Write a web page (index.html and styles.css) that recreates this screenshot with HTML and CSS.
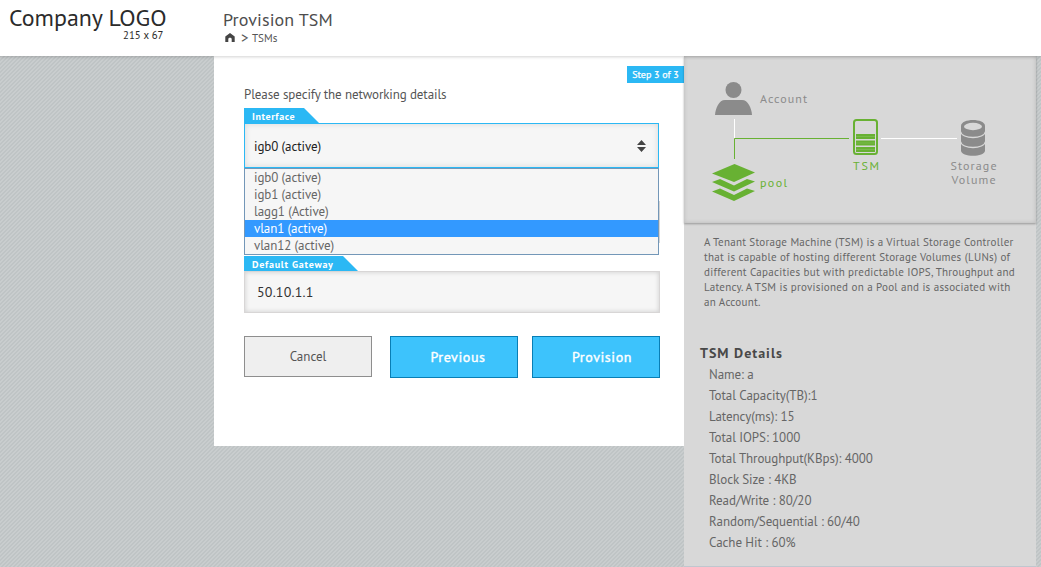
FILE: index.html
```html
<!DOCTYPE html>
<html lang="en">
<head>
<meta charset="utf-8">
<title>Provision TSM</title>
<link rel="stylesheet" href="styles.css">
</head>
<body>
<header class="header">
  <div class="logo">
    <div class="logo-name">Company LOGO</div>
    <div class="logo-size">215 x 67</div>
  </div>
  <div class="heading">
    <h1 class="title">Provision TSM</h1>
    <nav class="crumbs">
      <svg class="home" width="10" height="9" viewBox="0 0 10 9"><path fill="#444" d="M5 0 .3 3.500V9h3V6.200c0-1.800 3.400-1.800 3.400 0V9h3V3.500z"/></svg>
      <span class="sep">&gt;</span><span class="crumb">TSMs</span>
    </nav>
  </div>
</header>
<div class="page">
  <main class="panel">
    <div class="step">Step 3 of 3</div>
    <p class="intro">Please specify the networking details</p>
    <div class="tab tab-interface"><span>Interface</span></div>
    <div class="select">
      <span>igb0 (active)</span>
      <svg width="9" height="12" viewBox="0 0 9 12"><path fill="#444" d="M4.500 0 9 5H0zM0 7h9l-4.500 5z"/></svg>
      <ul class="options">
        <li>igb0 (active)</li>
        <li>igb1 (active)</li>
        <li>lagg1 (Active)</li>
        <li class="selected">vlan1 (active)</li>
        <li>vlan12 (active)</li>
      </ul>
    </div>
    <div class="covered-field"></div>
    <div class="tab tab-gateway"><span>Default Gateway</span></div>
    <div class="input">50.10.1.1</div>
    <div class="actions">
      <button class="btn cancel">Cancel</button>
      <button class="btn primary">Previous</button>
      <button class="btn primary provision">Provision</button>
    </div>
  </main>
  <aside class="side">
    <svg class="diagram" width="352" height="167" viewBox="0 0 352 167">
      <g fill="#8b8b8b">
        <circle cx="49.500" cy="34" r="8"/>
        <path d="M31 59c.5-7 4-15 10-15h17c6 0 9.500 8 10 15z"/>
        <path d="M277 70c0-8 24-8 24 0v24.500c0 7-24 7-24 0z"/>
      </g>
      <ellipse cx="289" cy="70.500" rx="9" ry="3.700" fill="#d8d8d8"/>
      <path d="M276.500 75.500c1 8 24 8 25 0M276.500 85.500c1 8 24 8 25 0" fill="none" stroke="#d8d8d8" stroke-width="1.300"/>
      <path d="M50.500 63v19M197 82.500h76" stroke="#fff" fill="none"/>
      <path d="M50.500 103V82.500H165" stroke="#68b133" fill="none"/>
      <g fill="#68b133">
        <path d="M50.500 108 71 116.500 50 126 28 117.500z"/>
        <path d="m28 126 8-3 14 6.500 13-6.500 8 2.500-21 10z"/>
        <path d="m28 135.500 8-3 14 6.500 13-6.500 8 2.500-21 10z"/>
        <path d="M172 78h19v5h-19zM172 84.500h19v5h-19zM172 91h19v5h-19z"/>
      </g>
      <path d="M172 80.500h19M172 87h19M172 93.500h19" stroke="#83c15a" stroke-width=".6"/>
      <rect x="170" y="64" width="23" height="34" rx="2.500" fill="none" stroke="#68b133" stroke-width="2"/>
      <g class="label" fill="#8b8b8b">
        <text x="76" y="47" textLength="47">Account</text>
        <text x="266.500" y="114" textLength="46">Storage</text>
        <text x="267.500" y="128" textLength="44">Volume</text>
      </g>
      <g class="label" fill="#68b133">
        <text x="76" y="131" textLength="27">pool</text>
        <text x="169" y="114" textLength="26">TSM</text>
      </g>
    </svg>
    <p class="about">A Tenant Storage Machine (TSM) is a Virtual Storage Controller<br>that is capable of hosting different Storage Volumes (LUNs) of<br>different Capacities but with predictable IOPS, Throughput and<br>Latency. A TSM is provisioned on a Pool and is associated with<br>an Account.</p>
    <h2 class="subtitle">TSM Details</h2>
    <ul class="details">
      <li>Name: a</li>
      <li>Total Capacity(TB):1</li>
      <li>Latency(ms): 15</li>
      <li>Total IOPS: 1000</li>
      <li>Total Throughput(KBps): 4000</li>
      <li>Block Size : 4KB</li>
      <li>Read/Write : 80/20</li>
      <li>Random/Sequential : 60/40</li>
      <li>Cache Hit : 60%</li>
    </ul>
  </aside>
</div>
</body>
</html>
```
FILE: styles.css
```css
* { box-sizing: border-box; }
body {
  margin: 0;
  height: 567px;
  overflow: hidden;
  font-family: "PT Sans", Lato, "Noto Sans", sans-serif;
  font-size: 13px;
  color: #555;
  background: repeating-linear-gradient(135deg, #bfc4c5 0 1.414px, #c9cdce 1.414px 2.828px);
}
h1, h2, p, ul { margin: 0; padding: 0; font-weight: normal; list-style: none; }
.header {
  position: relative;
  display: flex;
  height: 56px;
  background: #fff;
  box-shadow: 0 1px 3px rgba(0, 0, 0, .18);
}
.logo { width: 214px; padding: 5px 0 0 9px; color: #2b2b2b; }
.logo-name { font-size: 23.9px; line-height: 25px; }
.logo-size { font-size: 10.8px; line-height: 11px; padding-left: 114px; }
.heading { padding: 8px 0 0 9px; }
.title { font-size: 18px; line-height: 24px; letter-spacing: .1px; color: #4d4d4d; }
.crumbs { display: flex; align-items: center; height: 11px; padding-left: 2px; font-size: 11px; }
.sep { padding-left: 6px; width: 17px; font-size: 15px; }
.page { display: flex; align-items: flex-start; height: 511px; }
.panel { width: 470px; height: 390px; margin-left: 214px; padding: 10px 24px 0 30px; background: #fff; }
.step {
  width: 57px;
  height: 17px;
  margin: 0 -24px 0 auto;
  background: #2bb8f4;
  color: #fff;
  font-size: 10px;
  line-height: 17px;
  text-align: center;
  white-space: nowrap;
  -webkit-text-stroke: .25px #fff;
}
.intro { height: 25px; line-height: 23px; letter-spacing: -.1px; }
.tab {
  height: 15px;
  padding-left: 8px;
  background: #2bb8f4;
  color: #fff;
  font-size: 10px;
  font-weight: bold;
  line-height: 17px;
  letter-spacing: .75px;
  clip-path: polygon(0 0, calc(100% - 15px) 0, 100% 100%, 0 100%);
}
.tab-interface { width: 75px; letter-spacing: .6px; }
.tab-gateway { width: 114px; }
.select {
  position: relative;
  display: flex;
  align-items: center;
  justify-content: space-between;
  width: 415px;
  height: 45px;
  padding: 1px 12px 0 9px;
  border: 1px solid #2bb8f4;
  background: #f6f6f6;
  box-shadow: inset 0 0 6px rgba(0, 0, 0, .12);
  color: #222;
  letter-spacing: -.1px;
}
.options {
  position: absolute;
  z-index: 1;
  left: -1px;
  top: 44px;
  width: 415px;
  height: 87px;
  border: 1px solid #7397b8;
  background: #f6f6f6;
  color: #666;
}
.options li { height: 17px; padding-left: 9px; line-height: 17px; }
.options .selected { background: #3399ff; color: #fff; }
.covered-field { width: 416px; height: 42px; margin: 33px 0 13px; border: 1px solid #d5d5d5; background: #f6f6f6; }
.input {
  width: 416px;
  height: 42px;
  padding-left: 12px;
  border: 1px solid #d8d6d6;
  background: #f6f6f6;
  box-shadow: inset 0 0 5px rgba(0, 0, 0, .17);
  color: #333;
  font-size: 14px;
  line-height: 41px;
  letter-spacing: .2px;
}
.actions { display: flex; gap: 14px; align-items: flex-start; margin-top: 23px; width: 416px; }
.btn { width: 128px; height: 42px; padding: 0; border: 1px solid #087eb5; font: 13px "PT Sans", Lato, sans-serif; }
.cancel { height: 41px; margin-right: 4px; border-color: #8e8e8e; background: #efefef; color: #555; }
.primary { padding-left: 8px; background: #3dc3fc; color: #fff; font-size: 14px; letter-spacing: .6px; -webkit-text-stroke: .4px #fff; }
.provision { padding-left: 12px; }
.side {
  width: 352px;
  height: 510px;
  background: #d8d8d8;
  box-shadow: 0 1px #c0c7cf;
}
.diagram { display: block; box-shadow: 0 1px 2px rgba(0, 0, 0, .3), inset 0 0 4px rgba(0, 0, 0, .15); }
.label { font-size: 12px; }
.about { padding: 12px 0 0 20px; font-size: 11px; line-height: 15px; letter-spacing: .26px; white-space: nowrap; color: #666; }
.subtitle { padding: 33px 0 0 16px; font-size: 14px; font-weight: bold; line-height: 20px; letter-spacing: 1px; color: #484848; }
.details { padding: 1px 0 0 25px; color: #666; letter-spacing: -.06px; }
.details li { height: 21px; line-height: 21px; }
```
